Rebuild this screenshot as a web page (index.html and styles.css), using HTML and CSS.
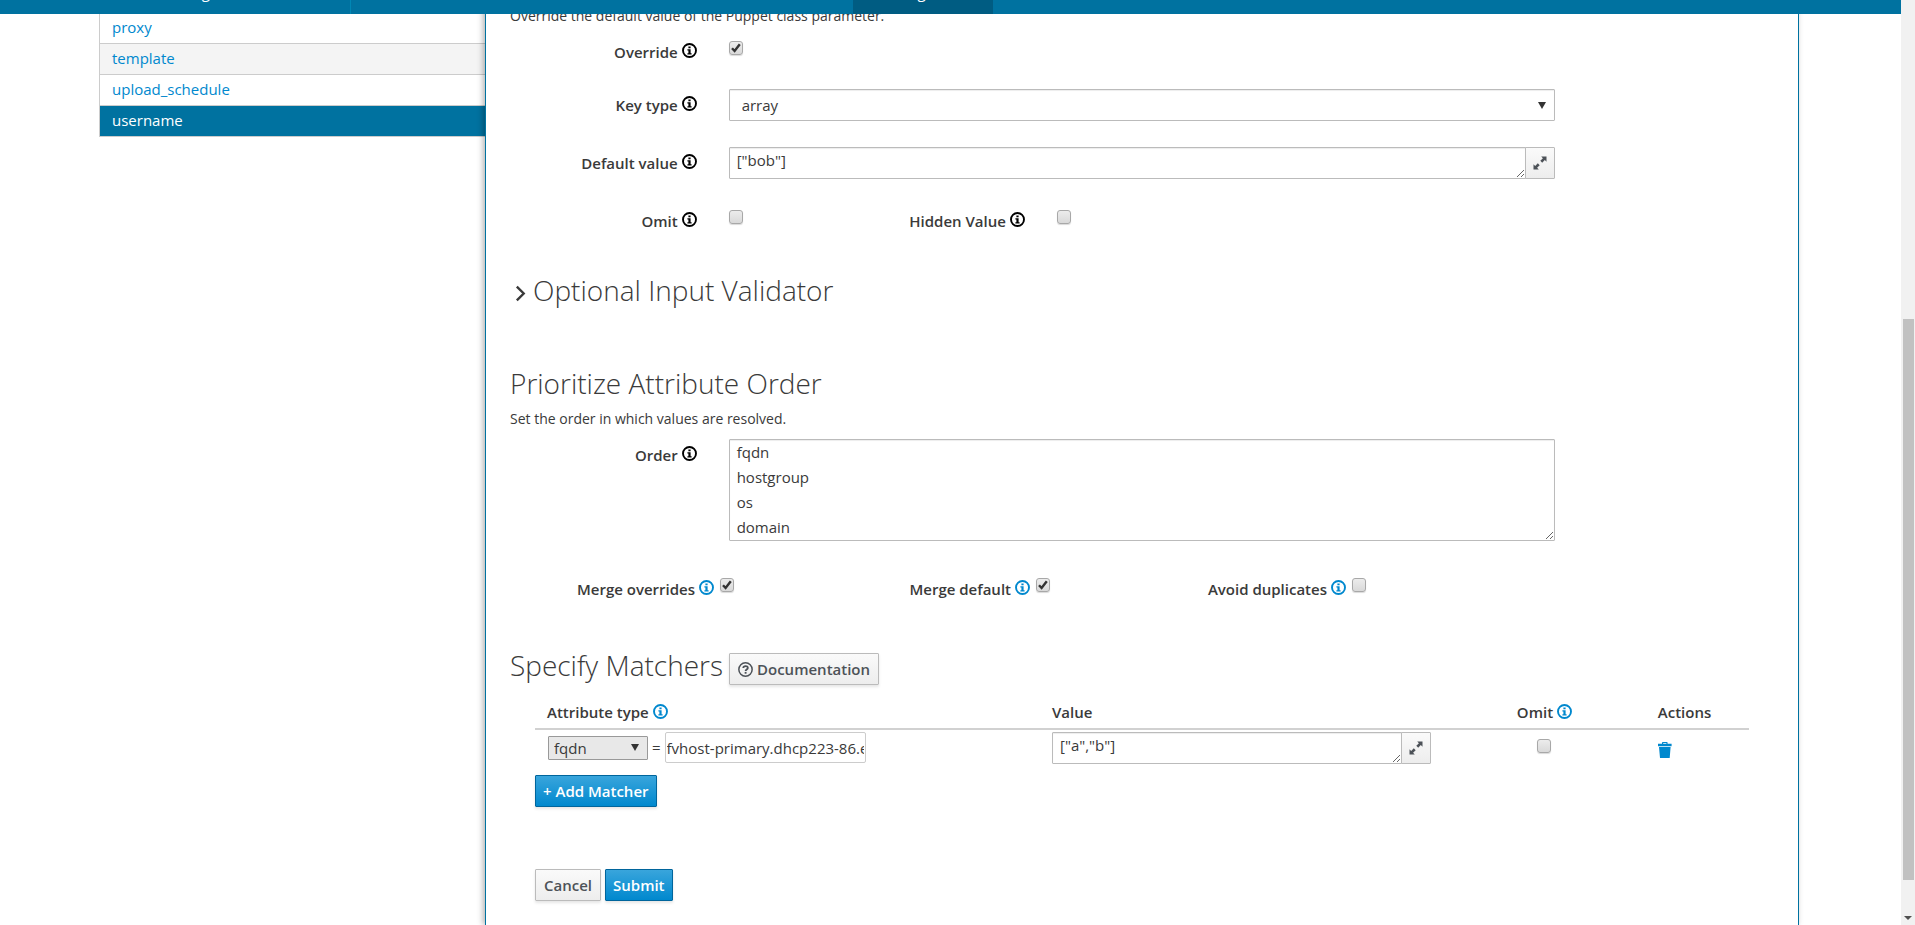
FILE: index.html
```html
<!DOCTYPE html>
<html lang="en">
<head>
  <meta charset="UTF-8">
  <meta name="viewport" content="width=device-width, initial-scale=1.0">
  <title>Edit Puppet Class</title>
  <link rel="stylesheet" href="styles.css">
</head>
<body>
  <!-- shared icons -->
  <svg class="sprite" aria-hidden="true">
    <symbol id="info" viewBox="0 0 15 15">
      <circle cx="7.5" cy="7.5" r="6.5" fill="none" stroke="currentColor" stroke-width="1.9"/>
      <path fill="currentColor" d="M6.4 3.4h2.2v1.8H6.4zM5.4 6.2h3.2v4h1V11.6H5.4v-1.4h1V7.6h-1z"/>
    </symbol>
    <symbol id="expand" viewBox="0 0 14 14">
      <path fill="currentColor" d="M8.2.5h5.3v5.3l-1.7-1.7-2.6 2.6-1.9-1.9 2.6-2.6zM5.8 13.5H.5V8.2l1.7 1.7 2.6-2.6 1.9 1.9-2.6 2.6z"/>
    </symbol>
  </svg>

  <nav class="navbar">
    <a class="nav-item nav-org" href="#">Organization</a>
    <a class="nav-item nav-active" href="#">Configure</a>
  </nav>

  <div class="page">
    <ul class="params">
      <li><a href="#">proxy</a></li>
      <li class="hover"><a href="#">template</a></li>
      <li><a href="#">upload_schedule</a></li>
      <li class="active"><a href="#">username</a></li>
    </ul>

    <form class="panel">
      <p class="help">Override the default value of the Puppet class parameter.</p>

      <div class="row">
        <label class="row-label" for="override">Override <svg class="icon"><use href="#info"/></svg></label>
        <div class="field"><input type="checkbox" id="override" checked></div>
      </div>

      <div class="row">
        <label class="row-label" for="key_type">Key type <svg class="icon"><use href="#info"/></svg></label>
        <div class="field">
          <select id="key_type" class="control">
            <option>array</option>
          </select>
        </div>
      </div>

      <div class="row">
        <label class="row-label" for="default_value">Default value <svg class="icon"><use href="#info"/></svg></label>
        <div class="field input-group">
          <textarea id="default_value" class="control" rows="1">["bob"]</textarea>
          <button type="button" class="expand" aria-label="Expand"><svg class="icon-sm"><use href="#expand"/></svg></button>
        </div>
      </div>

      <div class="row row-omit">
        <label class="row-label" for="omit">Omit <svg class="icon"><use href="#info"/></svg></label>
        <div class="field"><input type="checkbox" id="omit"></div>
        <label class="row-label" for="hidden_value">Hidden Value <svg class="icon"><use href="#info"/></svg></label>
        <div class="field"><input type="checkbox" id="hidden_value"></div>
      </div>

      <h2 class="validator">
        <svg class="chevron" viewBox="0 0 12 18"><path d="M2 1.5 9.5 9 2 16.5" fill="none" stroke="currentColor" stroke-width="2.6"/></svg>
        Optional Input Validator
      </h2>

      <h2 class="prioritize">Prioritize Attribute Order</h2>
      <p class="help">Set the order in which values are resolved.</p>

      <div class="row row-order">
        <label class="row-label" for="order">Order <svg class="icon"><use href="#info"/></svg></label>
        <div class="field">
          <textarea id="order" class="control" rows="4">fqdn
hostgroup
os
domain</textarea>
        </div>
      </div>

      <div class="merge">
        <div class="merge-cell">
          <label for="merge_overrides">Merge overrides <svg class="icon blue"><use href="#info"/></svg></label>
          <input type="checkbox" id="merge_overrides" checked>
        </div>
        <div class="merge-cell">
          <label for="merge_default">Merge default <svg class="icon blue"><use href="#info"/></svg></label>
          <input type="checkbox" id="merge_default" checked>
        </div>
        <div class="merge-cell">
          <label for="avoid_duplicates">Avoid duplicates <svg class="icon blue"><use href="#info"/></svg></label>
          <input type="checkbox" id="avoid_duplicates">
        </div>
      </div>

      <div class="matchers-title">
        <h2>Specify Matchers</h2>
        <button type="button" class="btn">
          <svg class="icon" viewBox="0 0 16 16">
            <circle cx="8" cy="8" r="7.1" fill="none" stroke="currentColor" stroke-width="1.6"/>
            <path d="M5.6 6.4C5.8 3.6 10.6 3.6 10.5 6.3 10.4 8 8.1 7.8 8.1 9.6" fill="none" stroke="currentColor" stroke-width="1.9"/>
            <path d="M7.1 10.6h2v1.9h-2z" fill="currentColor"/>
          </svg>
          Documentation
        </button>
      </div>

      <div class="matchers">
        <table>
          <thead>
            <tr>
              <th class="col-type">Attribute type <svg class="icon blue"><use href="#info"/></svg></th>
              <th class="col-value">Value</th>
              <th class="col-omit">Omit <svg class="icon blue"><use href="#info"/></svg></th>
              <th class="col-actions">Actions</th>
            </tr>
          </thead>
          <tbody>
            <tr>
              <td>
                <div class="matcher">
                  <select class="match-type" aria-label="Attribute type">
                    <option>fqdn</option>
                  </select>
                  <span>=</span>
                  <input type="text" class="match-value" aria-label="Attribute value" value="fvhost-primary.dhcp223-86.example.com">
                </div>
              </td>
              <td>
                <div class="input-group">
                  <textarea class="control" rows="1" aria-label="Value">["a","b"]</textarea>
                  <button type="button" class="expand" aria-label="Expand"><svg class="icon-sm"><use href="#expand"/></svg></button>
                </div>
              </td>
              <td class="col-omit"><input type="checkbox" aria-label="Omit"></td>
              <td>
                <a href="#" class="trash" aria-label="Remove">
                  <svg class="icon-trash" viewBox="0 0 14 16"><path fill="currentColor" d="M0 1.8h4V.8Q4 0 4.8 0h4q.8 0 .8.8v1h4v2.4H0zM5.2 1v.8h3.2V1zM1 5h11.6l-.9 11H2z"/></svg>
                </a>
              </td>
            </tr>
          </tbody>
        </table>
        <button type="button" class="btn btn-primary">+ Add Matcher</button>

        <div class="form-actions">
          <button type="button" class="btn">Cancel</button>
          <button type="submit" class="btn btn-primary">Submit</button>
        </div>
      </div>
    </form>
  </div>

  <div class="scrollbar">
    <div class="thumb"></div>
    <svg class="scroll-arrow" viewBox="0 0 8 4"><path d="M0 0h8L4 4z" fill="#505050"/></svg>
  </div>
</body>
</html>
```
FILE: styles.css
```css
* {
  box-sizing: border-box;
}
body {
  margin: 0;
  display: flex;
  height: 100vh;
  overflow: hidden;
  background: #fff;
  color: #3a3a3a;
  font-family: "Open Sans", "Noto Sans", sans-serif;
  font-size: 15px;
  line-height: 25px;
}
button, input, select, textarea {
  font-family: inherit;
  font-size: inherit;
  color: inherit;
}
a {
  color: #0088ce;
  text-decoration: none;
}
h2 {
  margin: 0;
  font-size: 28px;
  font-weight: 300;
  line-height: 32px;
}
.sprite {
  display: none;
}
.icon {
  width: 15px;
  height: 15px;
  flex: none;
  color: #000;
}
.icon.blue {
  color: #0088ce;
}
.icon-sm {
  width: 14px;
  height: 14px;
}

/* top bar */
.navbar {
  position: fixed;
  top: 0;
  left: 0;
  right: 14px;
  height: 14px;
  display: flex;
  align-items: flex-end;
  overflow: hidden;
  background: #0072a0;
  z-index: 2;
}
.nav-item {
  height: 30px;
  line-height: 16px;
  color: #fff;
}
.nav-org {
  width: 351px;
  padding-left: 184px;
  border-right: 1px solid #0087b5;
}
.nav-active {
  margin-left: 502px;
  width: 140px;
  padding-left: 28px;
  background: #005c82;
}

/* layout */
.page {
  flex: 1;
  display: flex;
  padding: 0 102px 0 99px;
}
.params {
  width: 386px;
  flex: none;
  align-self: flex-start;
  margin: 0;
  padding: 13px 0 0;
  list-style: none;
  border-left: 1px solid #ccc;
}
.params li {
  height: 31px;
  padding: 2px 12px;
  border-bottom: 1px solid #ccc;
}
.params .hover {
  background: #f4f4f4;
}
.params .active {
  background: #0072a0;
}
.params .active a {
  color: #fff;
}
.panel {
  flex: 1;
  min-height: 100vh;
  padding: 3px 6px 0;
  border: 1px solid #0072a0;
  border-width: 0 1px;
  box-shadow: -2px 0 6px rgba(0, 0, 0, 0.3);
}
.help {
  margin: 0;
  padding-left: 18px;
  font-size: 14px;
}

/* form rows */
.row {
  display: grid;
  grid-template-columns: 2fr 8fr 2fr;
  margin-bottom: 26px;
}
.row-omit {
  grid-template-columns: 200fr 100fr 203fr 697fr;
}
.help + .row {
  margin-top: 8px;
}
.row-label {
  display: flex;
  justify-content: flex-end;
  gap: 4px;
  height: 27px;
  padding: 4px 12px 0 0;
  font-weight: 600;
}
.row-label .icon {
  margin-top: 3px;
}
.field {
  min-width: 0;
  padding: 0 20px;
}
.control {
  display: block;
  width: 100%;
  padding: 0 7px;
  border: 1px solid #bbb;
  border-radius: 1px;
  background-color: #fff;
  line-height: 25px;
  box-shadow: inset 0 1px 1px rgba(0, 0, 0, 0.075);
}
select {
  appearance: none;
  background: url("data:image/svg+xml,%3Csvg xmlns='http://www.w3.org/2000/svg' viewBox='0 0 8 7'%3E%3Cpath d='M0 0h8L4 7z' fill='%23333'/%3E%3C/svg%3E") no-repeat right 8px center / 8px 7px;
}
select.control {
  height: 32px;
  padding: 0 12px;
}
.input-group {
  display: flex;
}
.input-group .control {
  flex: 1;
  width: auto;
  min-width: 0;
  height: 32px;
}
.expand {
  width: 30px;
  height: 32px;
  flex: none;
  margin-left: -1px;
  padding: 0;
  display: flex;
  align-items: center;
  justify-content: center;
  border: 1px solid #bbb;
  border-radius: 0 1px 1px 0;
  background: linear-gradient(#fafafa, #ededed);
  color: #4d5258;
}
input[type="checkbox"] {
  appearance: none;
  display: block;
  width: 14px;
  height: 14px;
  flex: none;
  margin: 5px 0 0;
  border: 1px solid #a8a8a8;
  border-radius: 3px;
  background: linear-gradient(#ececec, #d9d9d9);
  box-shadow: 0 1px 1px rgba(0, 0, 0, 0.15);
}
input[type="checkbox"]:checked {
  background: url("data:image/svg+xml,%3Csvg xmlns='http://www.w3.org/2000/svg' viewBox='0 0 12 12'%3E%3Cpath d='M2 6.2 4.6 9 9.8 2.2' fill='none' stroke='%23333' stroke-width='2.4'/%3E%3C/svg%3E") center / 12px 12px, linear-gradient(#ececec, #d9d9d9);
}
.validator {
  display: flex;
  gap: 7px;
  margin-top: 42px;
  padding-left: 23px;
}
.chevron {
  width: 11px;
  height: 17px;
  margin-top: 11px;
}
.prioritize {
  margin-top: 61px;
  padding-left: 18px;
}
.prioritize + .help {
  margin-top: 7px;
}
.help + .row-order {
  margin: 8px 0 32px;
}
.row-order .control {
  height: 102px;
}

/* merge options */
.merge {
  display: grid;
  grid-template-columns: 242fr 316fr 316fr 426fr;
}
.merge-cell {
  display: flex;
  justify-content: flex-end;
  gap: 6px;
}
.merge-cell label {
  display: flex;
  gap: 4px;
  padding-top: 4px;
  font-weight: 600;
}
.merge-cell .icon {
  margin-top: 3px;
}

/* matchers */
.matchers-title {
  display: flex;
  gap: 6px;
  margin-top: 51px;
  padding-left: 18px;
}
.matchers-title h2 {
  line-height: 24px;
}
.btn {
  display: inline-flex;
  align-items: center;
  gap: 4px;
  height: 32px;
  padding: 0 8px;
  border: 1px solid #bbb;
  border-radius: 1px;
  background: linear-gradient(#fafafa, #ededed);
  box-shadow: 0 2px 3px rgba(0, 0, 0, 0.1);
  color: #4d5258;
  font-weight: 600;
}
.btn .icon {
  color: inherit;
}
.btn-primary {
  padding: 0 7px;
  border-color: #00659c;
  background: linear-gradient(#39a5dc, #0088ce);
  color: #fff;
}
.matchers {
  padding: 14px 43px 0;
}
table {
  width: 100%;
  table-layout: fixed;
  border-collapse: collapse;
}
th {
  padding: 1px 12px 3px;
  border-bottom: 2px solid #d1d1d1;
  text-align: left;
  font-weight: 600;
}
th .icon {
  vertical-align: -1px;
}
td {
  height: 46px;
  padding: 2px 12px 0;
  vertical-align: top;
}
.col-type {
  width: 41.6%;
}
.col-value {
  width: 33.2%;
}
.col-omit {
  width: 16.7%;
  text-align: center;
}
td.col-omit input {
  margin: 7px auto 0;
}
.matcher {
  display: flex;
  align-items: center;
  gap: 4px;
  padding-left: 1px;
}
.match-type {
  width: 100px;
  height: 24px;
  padding: 0 5px;
  border: 1px solid #999;
  border-radius: 1px;
  background-color: #e8e8e8;
}
.match-value {
  width: 201px;
  height: 31px;
  padding: 0 1px;
  border: 1px solid #ccc;
  border-radius: 2px;
}
.trash {
  display: inline-block;
}
.icon-trash {
  display: block;
  width: 14px;
  height: 16px;
  margin-top: 10px;
}
.form-actions {
  display: flex;
  gap: 4px;
  margin-top: 62px;
}

/* page scrollbar */
.scrollbar {
  width: 14px;
  display: flex;
  flex-direction: column;
  align-items: center;
  padding-bottom: 5px;
  background: #f1f1f1;
}
.thumb {
  width: 11px;
  height: 61%;
  margin-top: 319px;
  background: #c1c1c1;
}
.scroll-arrow {
  width: 8px;
  height: 4px;
  margin-top: auto;
}
```
